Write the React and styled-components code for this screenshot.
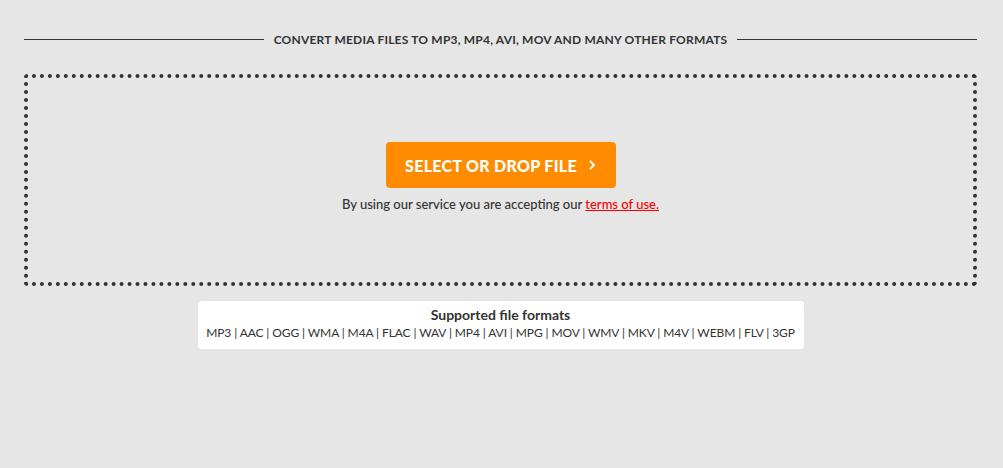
import React from 'react';
import styled, { createGlobalStyle } from 'styled-components';

const formats = [
  'MP3', 'AAC', 'OGG', 'WMA', 'M4A', 'FLAC', 'WAV', 'MP4', 'AVI',
  'MPG', 'MOV', 'WMV', 'MKV', 'M4V', 'WEBM', 'FLV', '3GP',
];

export default function App() {
  return (
    <>
      <GlobalStyle />
      <Page>
        <Heading>
          <Rule />
          <HeadingText>Convert media files to MP3, MP4, AVI, MOV and many other formats</HeadingText>
          <Rule />
        </Heading>
        <DropZone>
          <SelectButton>
            Select or drop file
            <Chevron viewBox="0 0 8 12">
              <path d="M2 2l4 4-4 4" />
            </Chevron>
          </SelectButton>
          <Terms>
            By using our service you are accepting our <a href="#terms">terms of use.</a>
          </Terms>
        </DropZone>
        <Formats>
          <FormatsTitle>Supported file formats</FormatsTitle>
          <FormatsList>{formats.join(' | ')}</FormatsList>
        </Formats>
      </Page>
    </>
  );
}

const GlobalStyle = createGlobalStyle`
  body {
    margin: 0;
    background: #e6e6e6;
    font-family: Lato, "Open Sans", sans-serif;
    color: #333;
  }
`;

const Page = styled.div`
  padding: 31px 26px 0 24px;
  display: flex;
  flex-direction: column;
  align-items: center;
`;

const Heading = styled.div`
  width: 100%;
  display: flex;
  align-items: center;
  gap: 10px;
  height: 16px;
`;

const Rule = styled.div`
  flex: 1;
  height: 1px;
  background: #333;
`;

const HeadingText = styled.h1`
  margin: 0;
  font-size: 12px;
  font-weight: 700;
  text-transform: uppercase;
  color: #333;
  letter-spacing: 0.2px;
  white-space: nowrap;
`;

const DropZone = styled.div`
  box-sizing: border-box;
  width: 100%;
  height: 212px;
  margin-top: 27px;
  border: 4px dotted #333;
  border-radius: 4px;
  display: flex;
  flex-direction: column;
  align-items: center;
  padding-top: 64px;
`;

const SelectButton = styled.button`
  width: 230px;
  height: 46px;
  border: none;
  border-radius: 4px;
  background: #ff8c00;
  color: #fff;
  font-family: Lato, "Open Sans", sans-serif;
  font-size: 16px;
  font-weight: 900;
  letter-spacing: 0.3px;
  text-transform: uppercase;
  display: flex;
  align-items: center;
  justify-content: center;
  gap: 11px;
  cursor: pointer;
`;

const Chevron = styled.svg`
  width: 8px;
  height: 12px;
  fill: none;
  stroke: #fff;
  stroke-width: 2;
`;

const Terms = styled.p`
  margin: 8px 0 0;
  font-size: 13px;
  font-weight: 500;
  color: #333;
  a {
    color: #f00;
    text-decoration: underline;
  }
`;

const Formats = styled.div`
  box-sizing: border-box;
  width: 606px;
  height: 48px;
  margin-top: 15px;
  background: #fff;
  border-radius: 4px;
  display: flex;
  flex-direction: column;
  align-items: center;
  padding-top: 5px;
`;

const FormatsTitle = styled.div`
  font-size: 14px;
  font-weight: 700;
  color: #333;
  line-height: 17px;
`;

const FormatsList = styled.div`
  margin-top: 2px;
  font-size: 12px;
  letter-spacing: -0.1px;
  color: #333;
  line-height: 15px;
`;
